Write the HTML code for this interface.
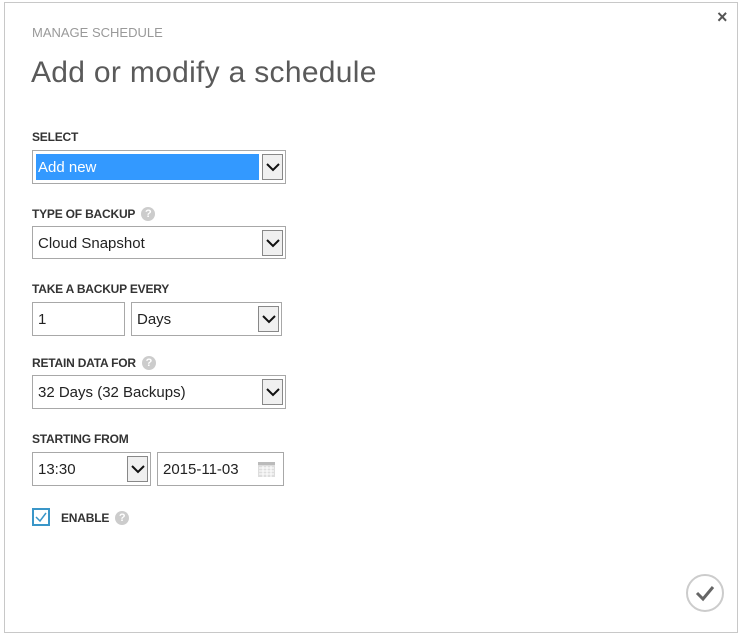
<!DOCTYPE html><html><head><style>
body{margin:0;width:741px;height:636px;background:#fff;font-family:"Liberation Sans",sans-serif;position:relative;overflow:hidden}
.a{position:absolute}
.frame{left:4px;top:2px;width:734px;height:631px;border:1px solid #c8c8c8;box-sizing:border-box}
.lbl{font-size:12px;font-weight:bold;color:#333;letter-spacing:-0.2px}
.box{border:1px solid #a8a8a8;box-sizing:border-box;background:#fff;font-size:15px;color:#222}
.box span{position:absolute;left:5px;top:8px}
.arr{position:absolute;right:2px;top:3px;width:21px;height:26px;border:1px solid #888;box-sizing:border-box;background:#f0f0f0}
.arr svg{position:absolute;left:3px;top:7px}
.q{display:inline-block;width:14px;height:14px;border-radius:50%;background:#ccc;color:#fff;font-size:11px;text-align:center;line-height:14px;vertical-align:1px;margin-left:6px}
</style></head><body>
<div class="a frame"></div>
<div class="a" style="left:717px;top:7px;font-size:18px;font-weight:bold;color:#555">×</div>
<div class="a" style="left:32px;top:25px;font-size:13px;color:#999">MANAGE SCHEDULE</div>
<div class="a" style="left:31px;top:56px;font-size:30px;color:#5a5a5a;letter-spacing:0.3px">Add or modify a schedule</div>

<div class="a lbl" style="left:32px;top:130px">SELECT</div>
<div class="a box" style="left:32px;top:150px;width:254px;height:34px">
<div class="a" style="left:3px;top:3px;width:223px;height:26px;background:#3399ff"></div>
<span style="color:#fff;left:5px;top:8px">Add new</span>
<div class="arr"><svg width="14" height="10"><path d="M1 2 L7 8 L13 2" stroke="#111" stroke-width="2" fill="none"/></svg></div></div>

<div class="a lbl" style="left:32px;top:207px">TYPE OF BACKUP<span class="q">?</span></div>
<div class="a box" style="left:32px;top:226px;width:254px;height:33px"><span>Cloud Snapshot</span>
<div class="arr"><svg width="14" height="10"><path d="M1 2 L7 8 L13 2" stroke="#111" stroke-width="2" fill="none"/></svg></div></div>

<div class="a lbl" style="left:32px;top:282px">TAKE A BACKUP EVERY</div>
<div class="a box" style="left:32px;top:302px;width:93px;height:34px"><span>1</span></div>
<div class="a box" style="left:131px;top:302px;width:151px;height:34px"><span>Days</span>
<div class="arr"><svg width="14" height="10"><path d="M1 2 L7 8 L13 2" stroke="#111" stroke-width="2" fill="none"/></svg></div></div>

<div class="a lbl" style="left:32px;top:356px">RETAIN DATA FOR<span class="q">?</span></div>
<div class="a box" style="left:32px;top:375px;width:254px;height:34px"><span>32 Days (32 Backups)</span>
<div class="arr"><svg width="14" height="10"><path d="M1 2 L7 8 L13 2" stroke="#111" stroke-width="2" fill="none"/></svg></div></div>

<div class="a lbl" style="left:32px;top:432px">STARTING FROM</div>
<div class="a box" style="left:32px;top:452px;width:119px;height:34px"><span>13:30</span>
<div class="arr"><svg width="14" height="10"><path d="M1 2 L7 8 L13 2" stroke="#111" stroke-width="2" fill="none"/></svg></div></div>
<div class="a box" style="left:157px;top:452px;width:127px;height:34px"><span>2015-11-03</span>
<svg class="a" style="left:100px;top:9px" width="17" height="15"><rect x="0" y="0" width="17" height="15" fill="#ddd"/><rect x="0" y="0" width="17" height="3" fill="#bbb"/><path d="M1 6H16M1 9H16M1 12H16M5 4V15M9 4V15M13 4V15" stroke="#fff" stroke-width="1"/></svg></div>

<div class="a" style="left:32px;top:508px;width:18px;height:18px;border:2px solid #3a96c8;box-sizing:border-box"><svg width="14" height="14" style="position:absolute;left:0;top:0"><path d="M2 7 L6 11 L12 3" stroke="#3a96c8" stroke-width="1.5" fill="none"/></svg></div>
<div class="a lbl" style="left:61px;top:511px">ENABLE<span class="q" style="margin-left:6px">?</span></div>

<svg class="a" style="left:685px;top:573px" width="40" height="40"><circle cx="20" cy="20" r="18" fill="#fff" stroke="#ccc" stroke-width="2"/><path d="M12 20 L18 26 L28 14" stroke="#666" stroke-width="3" fill="none"/></svg>
</body></html>
